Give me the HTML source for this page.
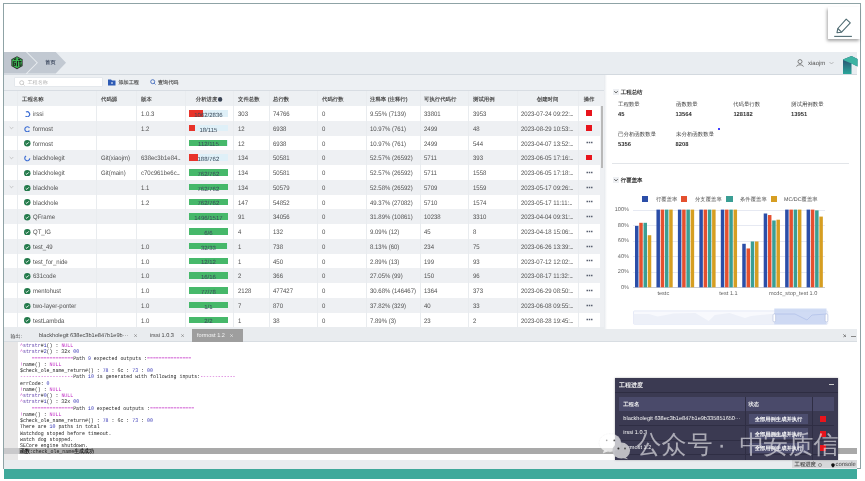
<!DOCTYPE html><html><head><meta charset="utf-8"><style>
*{margin:0;padding:0;box-sizing:border-box}
html,body{width:865px;height:481px;overflow:hidden;background:#fff;position:relative;font-family:"Liberation Sans", sans-serif;color:#555;text-rendering:geometricPrecision}
body{filter:blur(0.3px)}
.ab{position:absolute}
.t{position:absolute;white-space:nowrap;line-height:1}

</style></head><body>
<div class="ab" style="left:3px;top:3px;width:858px;height:466px;border:1px solid #8fa3a6"></div>
<div class="ab" style="left:828px;top:7px;width:31.5px;height:32px;background:#fff;box-shadow:-1px 2px 3px rgba(0,0,0,0.35)"></div>
<svg class="ab" style="left:827px;top:7px" width="32" height="32" viewBox="0 0 32 32">
<path d="M10 25.7 L10.8 21.5 L19.2 12.2 L23.3 15.9 L14.6 25.2 Z" fill="none" stroke="#4f6b72" stroke-width="1.1" stroke-linejoin="round"/>
<path d="M10.8 21.5 L14.6 25.2" stroke="#4f6b72" stroke-width="1.1"/>
<path d="M7.2 29.4 H24.9" stroke="#4f6b72" stroke-width="1.1"/>
</svg>
<div class="ab" style="left:4px;top:52px;width:853px;height:22.5px;background:#e9edf1;border-bottom:1px solid #d3d9df"></div>
<svg class="ab" style="left:4px;top:52px" width="64" height="21.5" viewBox="0 0 64 21.5">
<path d="M0 0 H21.9 L32.6 10.75 L21.9 21.5 H0 Z" fill="#bfc6cf"/>
<path d="M23.2 0 H51.7 L62 10.75 L51.7 21.5 H23.2 L33.9 10.75 Z" fill="#c2c9d2"/>
</svg>
<svg class="ab" style="left:10.6px;top:56.4px" width="12" height="13.4" viewBox="0 0 12 13.4">
<path d="M6 0.2 L11.6 3.3 V10.1 L6 13.2 L0.4 10.1 V3.3 Z" fill="#262b26"/>
<path d="M6 1.1 L10.8 3.8 V9.6 L6 12.3 L1.2 9.6 V3.8 Z" fill="#3dba55"/>
<path d="M2.6 3.2 L4.6 2.2 L5.6 3 L3.8 4.2 Z M7.4 2.6 L9.6 3.6 L8.4 4.6 L6.8 3.6 Z" fill="#1f241f"/>
<path d="M1.8 5.2 h3 v1 h-2 v2.6 h1.2 v-1 h-0.8 v-0.9 h1.8 v2.9 h-3.2z" fill="#1f241f"/>
<path d="M5.9 5 h1.1 v5.6 h-1.1z" fill="#1f241f"/>
<path d="M7.6 5 h2.8 v1 h-0.9 v4.3 h-1.1 v-4.3 h-0.8z" fill="#1f241f"/>
<path d="M10.6 7 V9.6 L8.6 10.8 Z" fill="#1f241f" opacity="0.8"/>
</svg>
<div class="t" style="left:45.3px;top:61.3px;font-size:5.1px;color:#3e4a60;font-weight:bold">首页</div>
<svg class="ab" style="left:796px;top:59px" width="8" height="8" viewBox="0 0 8 8">
<circle cx="4" cy="2.6" r="2" fill="none" stroke="#666" stroke-width="0.8"/>
<path d="M0.6 7.6 C1 5.2 7 5.2 7.4 7.6" fill="none" stroke="#666" stroke-width="0.8"/>
</svg>
<div class="t" style="left:808px;top:60.5px;font-size:6px;color:#555">xiaojm</div>
<svg class="ab" style="left:829px;top:61px" width="5" height="4" viewBox="0 0 5 4"><path d="M0.5 1 L2.5 3 L4.5 1" fill="none" stroke="#999" stroke-width="0.6"/></svg>
<svg class="ab" style="left:842px;top:55px" width="16" height="19" viewBox="0 0 16 19">
<defs><linearGradient id="lg" x1="0" y1="0" x2="0" y2="1"><stop offset="0" stop-color="#2c3e6a"/><stop offset="1" stop-color="#2aa69a"/></linearGradient></defs>
<path d="M1 4.5 L9.5 1 L15.5 4 V11.5 L9.5 8.5 V19 H1 Z" fill="url(#lg)"/>
<path d="M1 4.5 L9.5 1 L15.5 4 V11.5 L9.5 8.5 L1 5 Z" fill="#3db3a3"/>
</svg>
<div class="ab" style="left:4px;top:74.5px;width:599.5px;height:16.5px;background:#edf0f3;border-bottom:1px solid #d8dde3"></div>
<div class="ab" style="left:14px;top:77px;width:89px;height:10px;background:#fff;border:1px solid #e4e8ec;border-radius:1px"></div>
<svg class="ab" style="left:18.5px;top:79.5px" width="6" height="6" viewBox="0 0 6 6"><circle cx="2.7" cy="2.7" r="2" fill="none" stroke="#aaa" stroke-width="0.6"/><path d="M4.2 4.2 L5.5 5.5" stroke="#aaa" stroke-width="0.6"/></svg>
<div class="t" style="left:27.5px;top:80.6px;font-size:5.1px;color:#b0b0b0">工程名称</div>
<svg class="ab" style="left:108px;top:79px" width="8" height="7" viewBox="0 0 8 7"><path d="M0 0.5 H3 L4 1.5 H7.5 V6.5 H0 Z" fill="#2d5bb5"/><path d="M3 4 H5 M4 3 V5" stroke="#fff" stroke-width="0.6"/></svg>
<div class="t" style="left:118.5px;top:80.6px;font-size:5.1px;color:#555;font-weight:bold">添加工程</div>
<svg class="ab" style="left:149.5px;top:79px" width="6" height="6" viewBox="0 0 6 6"><circle cx="2.7" cy="2.7" r="2" fill="none" stroke="#2d5bb5" stroke-width="0.8"/><path d="M4.2 4.2 L5.5 5.5" stroke="#2d5bb5" stroke-width="0.8"/></svg>
<div class="t" style="left:158px;top:80.6px;font-size:5.1px;color:#555;font-weight:bold">查询代码</div>
<div class="ab" style="left:4px;top:91px;width:596px;height:15px;background:#edf0f3"></div>
<div class="t" style="left:21.6px;top:96.7px;font-size:10px;transform:scale(0.54);transform-origin:0 0;color:#4a4a4a;font-weight:bold">工程名称</div>
<div class="t" style="left:100.6px;top:96.7px;font-size:10px;transform:scale(0.54);transform-origin:0 0;color:#4a4a4a;font-weight:bold">代码源</div>
<div class="t" style="left:140.6px;top:96.7px;font-size:10px;transform:scale(0.54);transform-origin:0 0;color:#4a4a4a;font-weight:bold">版本</div>
<div class="t" style="left:184.7px;width:89.4px;text-align:center;top:96.7px;font-size:10px;transform:scale(0.54);transform-origin:0 0;color:#4a4a4a;font-weight:bold">分析进度<span style="display:inline-block;width:8.5px;height:8.5px;border-radius:50%;background:#3a4456;vertical-align:-1.1px;margin-left:1.1px"></span></div>
<div class="t" style="left:237.6px;top:96.7px;font-size:10px;transform:scale(0.54);transform-origin:0 0;color:#4a4a4a;font-weight:bold">文件总数</div>
<div class="t" style="left:273.4px;top:96.7px;font-size:10px;transform:scale(0.54);transform-origin:0 0;color:#4a4a4a;font-weight:bold">总行数</div>
<div class="t" style="left:321.9px;top:96.7px;font-size:10px;transform:scale(0.54);transform-origin:0 0;color:#4a4a4a;font-weight:bold">代码行数</div>
<div class="t" style="left:370.2px;top:96.7px;font-size:10px;transform:scale(0.54);transform-origin:0 0;color:#4a4a4a;font-weight:bold">注释率 (注释行)</div>
<div class="t" style="left:424.2px;top:96.7px;font-size:10px;transform:scale(0.54);transform-origin:0 0;color:#4a4a4a;font-weight:bold">可执行代码行</div>
<div class="t" style="left:473.0px;top:96.7px;font-size:10px;transform:scale(0.54);transform-origin:0 0;color:#4a4a4a;font-weight:bold">测试用例</div>
<div class="t" style="left:516.7px;width:113.3px;text-align:center;top:96.7px;font-size:10px;transform:scale(0.54);transform-origin:0 0;color:#4a4a4a;font-weight:bold">创建时间</div>
<div class="t" style="left:577.9px;width:40.9px;text-align:center;top:96.7px;font-size:10px;transform:scale(0.54);transform-origin:0 0;color:#4a4a4a;font-weight:bold">操作</div>
<div class="ab" style="left:4px;top:106.00px;width:596px;height:15.05px;background:#fff"></div>
<svg class="ab" style="left:24.0px;top:110.92px" width="6.5" height="6.5" viewBox="0 0 10 10"><path d="M3 1.6 A3.9 3.9 0 1 1 2.4 8.2" fill="none" stroke="#3d6ed4" stroke-width="1.8"/></svg>
<div class="t" style="left:33.3px;top:112.03px;font-size:6.5px;transform:scaleX(0.923);transform-origin:0 0;color:#505050">irssi</div>
<div class="t" style="left:140.6px;top:112.03px;font-size:6.5px;transform:scaleX(0.923);transform-origin:0 0;color:#505050">1.0.3</div>
<div class="ab" style="left:188.6px;top:110.08px;width:39.6px;height:6.6px;background:#dff0f8"></div>
<div class="ab" style="left:188.6px;top:110.08px;width:14.83px;height:6.6px;background:#e8332a"></div>
<div class="t" style="left:188.6px;width:39.6px;text-align:center;top:112.78px;font-size:6.0px;color:#3a4a5a">1062/2836</div>
<div class="t" style="left:237.6px;top:112.03px;font-size:6.5px;transform:scaleX(0.923);transform-origin:0 0;color:#505050">303</div>
<div class="t" style="left:273.4px;top:112.03px;font-size:6.5px;transform:scaleX(0.923);transform-origin:0 0;color:#505050">74766</div>
<div class="t" style="left:321.9px;top:112.03px;font-size:6.5px;transform:scaleX(0.923);transform-origin:0 0;color:#505050">0</div>
<div class="t" style="left:370.2px;top:112.03px;font-size:6.5px;transform:scaleX(0.923);transform-origin:0 0;color:#505050">9.55% (7139)</div>
<div class="t" style="left:424.2px;top:112.03px;font-size:6.5px;transform:scaleX(0.923);transform-origin:0 0;color:#505050">33801</div>
<div class="t" style="left:473.0px;top:112.03px;font-size:6.5px;transform:scaleX(0.923);transform-origin:0 0;color:#505050">3953</div>
<div class="t" style="left:521.3px;top:112.03px;font-size:6.5px;transform:scaleX(0.923);transform-origin:0 0;color:#505050">2023-07-24 09:22:<span style="letter-spacing:-0.95px">...</span></div>
<div class="ab" style="left:586px;top:110.38px;width:6.2px;height:5.8px;background:#e8141c"></div>
<div class="ab" style="left:4px;top:120.75px;width:596px;height:15.05px;background:#eef0f3"></div>
<svg class="ab" style="left:9px;top:126.1px" width="5" height="4" viewBox="0 0 5 4"><path d="M0.7 1 L2.5 2.8 L4.3 1" fill="none" stroke="#aaa" stroke-width="0.6"/></svg>
<svg class="ab" style="left:24.0px;top:125.67px" width="6.5" height="6.5" viewBox="0 0 10 10"><path d="M8.4 2.8 A3.9 3.9 0 1 0 8.4 7.2" fill="none" stroke="#3d6ed4" stroke-width="1.8"/></svg>
<div class="t" style="left:33.3px;top:126.78px;font-size:6.5px;transform:scaleX(0.923);transform-origin:0 0;color:#505050">formost</div>
<div class="t" style="left:140.6px;top:126.78px;font-size:6.5px;transform:scaleX(0.923);transform-origin:0 0;color:#505050">1.2</div>
<div class="ab" style="left:188.6px;top:124.83px;width:39.6px;height:6.6px;background:#dff0f8"></div>
<div class="ab" style="left:188.6px;top:124.83px;width:6.20px;height:6.6px;background:#e8332a"></div>
<div class="t" style="left:188.6px;width:39.6px;text-align:center;top:127.53px;font-size:6.0px;color:#3a4a5a">18/115</div>
<div class="t" style="left:237.6px;top:126.78px;font-size:6.5px;transform:scaleX(0.923);transform-origin:0 0;color:#505050">12</div>
<div class="t" style="left:273.4px;top:126.78px;font-size:6.5px;transform:scaleX(0.923);transform-origin:0 0;color:#505050">6938</div>
<div class="t" style="left:321.9px;top:126.78px;font-size:6.5px;transform:scaleX(0.923);transform-origin:0 0;color:#505050">0</div>
<div class="t" style="left:370.2px;top:126.78px;font-size:6.5px;transform:scaleX(0.923);transform-origin:0 0;color:#505050">10.97% (761)</div>
<div class="t" style="left:424.2px;top:126.78px;font-size:6.5px;transform:scaleX(0.923);transform-origin:0 0;color:#505050">2499</div>
<div class="t" style="left:473.0px;top:126.78px;font-size:6.5px;transform:scaleX(0.923);transform-origin:0 0;color:#505050">48</div>
<div class="t" style="left:521.3px;top:126.78px;font-size:6.5px;transform:scaleX(0.923);transform-origin:0 0;color:#505050">2023-08-29 10:53:<span style="letter-spacing:-0.95px">...</span></div>
<div class="ab" style="left:586px;top:125.12px;width:6.2px;height:5.8px;background:#e8141c"></div>
<div class="ab" style="left:4px;top:135.50px;width:596px;height:15.05px;background:#fff"></div>
<svg class="ab" style="left:24.0px;top:140.43px" width="6.5" height="6.5" viewBox="0 0 10 10"><circle cx="5" cy="5" r="5" fill="#237a4b"/><path d="M2.6 5.2 L4.3 6.8 L7.4 3.6" fill="none" stroke="#fff" stroke-width="1.4"/></svg>
<div class="t" style="left:33.3px;top:141.53px;font-size:6.5px;transform:scaleX(0.923);transform-origin:0 0;color:#505050">formost</div>
<div class="ab" style="left:188.6px;top:139.57px;width:39.6px;height:6.6px;background:#dff0f8"></div>
<div class="ab" style="left:188.6px;top:139.57px;width:38.57px;height:6.6px;background:#46b86a"></div>
<div class="t" style="left:188.6px;width:39.6px;text-align:center;top:142.28px;font-size:6.0px;color:#3a4a5a">112/115</div>
<div class="t" style="left:237.6px;top:141.53px;font-size:6.5px;transform:scaleX(0.923);transform-origin:0 0;color:#505050">12</div>
<div class="t" style="left:273.4px;top:141.53px;font-size:6.5px;transform:scaleX(0.923);transform-origin:0 0;color:#505050">6938</div>
<div class="t" style="left:321.9px;top:141.53px;font-size:6.5px;transform:scaleX(0.923);transform-origin:0 0;color:#505050">0</div>
<div class="t" style="left:370.2px;top:141.53px;font-size:6.5px;transform:scaleX(0.923);transform-origin:0 0;color:#505050">10.97% (761)</div>
<div class="t" style="left:424.2px;top:141.53px;font-size:6.5px;transform:scaleX(0.923);transform-origin:0 0;color:#505050">2499</div>
<div class="t" style="left:473.0px;top:141.53px;font-size:6.5px;transform:scaleX(0.923);transform-origin:0 0;color:#505050">544</div>
<div class="t" style="left:521.3px;top:141.53px;font-size:6.5px;transform:scaleX(0.923);transform-origin:0 0;color:#505050">2023-04-07 13:52:<span style="letter-spacing:-0.95px">...</span></div>
<svg class="ab" style="left:585.5px;top:141px" width="7" height="3" viewBox="0 0 7 3"><rect x="0.5" y="0.75" width="1.5" height="1.5" fill="#5a6070"/><rect x="2.75" y="0.75" width="1.5" height="1.5" fill="#5a6070"/><rect x="5" y="0.75" width="1.5" height="1.5" fill="#5a6070"/></svg>
<div class="ab" style="left:4px;top:150.25px;width:596px;height:15.05px;background:#eef0f3"></div>
<svg class="ab" style="left:9px;top:155.6px" width="5" height="4" viewBox="0 0 5 4"><path d="M0.7 1 L2.5 2.8 L4.3 1" fill="none" stroke="#aaa" stroke-width="0.6"/></svg>
<svg class="ab" style="left:24.0px;top:155.18px" width="6.5" height="6.5" viewBox="0 0 10 10"><path d="M3.2 1.5 A3.9 3.9 0 1 0 8.9 5.2" fill="none" stroke="#3d6ed4" stroke-width="1.8"/></svg>
<div class="t" style="left:33.3px;top:156.28px;font-size:6.5px;transform:scaleX(0.923);transform-origin:0 0;color:#505050">blackholegit</div>
<div class="t" style="left:100.6px;top:156.28px;font-size:6.5px;transform:scaleX(0.923);transform-origin:0 0;color:#505050">Git(xiaojm)</div>
<div class="t" style="left:140.6px;top:156.28px;font-size:6.5px;transform:scaleX(0.923);transform-origin:0 0;color:#505050">638ec3b1e84<span style="letter-spacing:-0.95px">...</span></div>
<div class="ab" style="left:188.6px;top:154.32px;width:39.6px;height:6.6px;background:#dff0f8"></div>
<div class="ab" style="left:188.6px;top:154.32px;width:9.77px;height:6.6px;background:#e8332a"></div>
<div class="t" style="left:188.6px;width:39.6px;text-align:center;top:157.03px;font-size:6.0px;color:#3a4a5a">188/762</div>
<div class="t" style="left:237.6px;top:156.28px;font-size:6.5px;transform:scaleX(0.923);transform-origin:0 0;color:#505050">134</div>
<div class="t" style="left:273.4px;top:156.28px;font-size:6.5px;transform:scaleX(0.923);transform-origin:0 0;color:#505050">50581</div>
<div class="t" style="left:321.9px;top:156.28px;font-size:6.5px;transform:scaleX(0.923);transform-origin:0 0;color:#505050">0</div>
<div class="t" style="left:370.2px;top:156.28px;font-size:6.5px;transform:scaleX(0.923);transform-origin:0 0;color:#505050">52.57% (26592)</div>
<div class="t" style="left:424.2px;top:156.28px;font-size:6.5px;transform:scaleX(0.923);transform-origin:0 0;color:#505050">5711</div>
<div class="t" style="left:473.0px;top:156.28px;font-size:6.5px;transform:scaleX(0.923);transform-origin:0 0;color:#505050">393</div>
<div class="t" style="left:521.3px;top:156.28px;font-size:6.5px;transform:scaleX(0.923);transform-origin:0 0;color:#505050">2023-06-05 17:16:<span style="letter-spacing:-0.95px">...</span></div>
<div class="ab" style="left:586px;top:154.62px;width:6.2px;height:5.8px;background:#e8141c"></div>
<div class="ab" style="left:4px;top:165.00px;width:596px;height:15.05px;background:#fff"></div>
<svg class="ab" style="left:24.0px;top:169.93px" width="6.5" height="6.5" viewBox="0 0 10 10"><circle cx="5" cy="5" r="5" fill="#237a4b"/><path d="M2.6 5.2 L4.3 6.8 L7.4 3.6" fill="none" stroke="#fff" stroke-width="1.4"/></svg>
<div class="t" style="left:33.3px;top:171.03px;font-size:6.5px;transform:scaleX(0.923);transform-origin:0 0;color:#505050">blackholegit</div>
<div class="t" style="left:100.6px;top:171.03px;font-size:6.5px;transform:scaleX(0.923);transform-origin:0 0;color:#505050">Git(main)</div>
<div class="t" style="left:140.6px;top:171.03px;font-size:6.5px;transform:scaleX(0.923);transform-origin:0 0;color:#505050">c70c961be6c<span style="letter-spacing:-0.95px">...</span></div>
<div class="ab" style="left:188.6px;top:169.07px;width:39.6px;height:6.6px;background:#dff0f8"></div>
<div class="ab" style="left:188.6px;top:169.07px;width:39.60px;height:6.6px;background:#46b86a"></div>
<div class="t" style="left:188.6px;width:39.6px;text-align:center;top:171.78px;font-size:6.0px;color:#3a4a5a">762/762</div>
<div class="t" style="left:237.6px;top:171.03px;font-size:6.5px;transform:scaleX(0.923);transform-origin:0 0;color:#505050">134</div>
<div class="t" style="left:273.4px;top:171.03px;font-size:6.5px;transform:scaleX(0.923);transform-origin:0 0;color:#505050">50581</div>
<div class="t" style="left:321.9px;top:171.03px;font-size:6.5px;transform:scaleX(0.923);transform-origin:0 0;color:#505050">0</div>
<div class="t" style="left:370.2px;top:171.03px;font-size:6.5px;transform:scaleX(0.923);transform-origin:0 0;color:#505050">52.57% (26592)</div>
<div class="t" style="left:424.2px;top:171.03px;font-size:6.5px;transform:scaleX(0.923);transform-origin:0 0;color:#505050">5711</div>
<div class="t" style="left:473.0px;top:171.03px;font-size:6.5px;transform:scaleX(0.923);transform-origin:0 0;color:#505050">1558</div>
<div class="t" style="left:521.3px;top:171.03px;font-size:6.5px;transform:scaleX(0.923);transform-origin:0 0;color:#505050">2023-06-05 17:18:<span style="letter-spacing:-0.95px">...</span></div>
<svg class="ab" style="left:585.5px;top:171px" width="7" height="3" viewBox="0 0 7 3"><rect x="0.5" y="0.75" width="1.5" height="1.5" fill="#5a6070"/><rect x="2.75" y="0.75" width="1.5" height="1.5" fill="#5a6070"/><rect x="5" y="0.75" width="1.5" height="1.5" fill="#5a6070"/></svg>
<div class="ab" style="left:4px;top:179.75px;width:596px;height:15.05px;background:#eef0f3"></div>
<svg class="ab" style="left:9px;top:185.1px" width="5" height="4" viewBox="0 0 5 4"><path d="M0.7 1 L2.5 2.8 L4.3 1" fill="none" stroke="#aaa" stroke-width="0.6"/></svg>
<svg class="ab" style="left:24.0px;top:184.68px" width="6.5" height="6.5" viewBox="0 0 10 10"><circle cx="5" cy="5" r="5" fill="#237a4b"/><path d="M2.6 5.2 L4.3 6.8 L7.4 3.6" fill="none" stroke="#fff" stroke-width="1.4"/></svg>
<div class="t" style="left:33.3px;top:185.78px;font-size:6.5px;transform:scaleX(0.923);transform-origin:0 0;color:#505050">blackhole</div>
<div class="t" style="left:140.6px;top:185.78px;font-size:6.5px;transform:scaleX(0.923);transform-origin:0 0;color:#505050">1.1</div>
<div class="ab" style="left:188.6px;top:183.82px;width:39.6px;height:6.6px;background:#dff0f8"></div>
<div class="ab" style="left:188.6px;top:183.82px;width:39.60px;height:6.6px;background:#46b86a"></div>
<div class="t" style="left:188.6px;width:39.6px;text-align:center;top:186.53px;font-size:6.0px;color:#3a4a5a">762/762</div>
<div class="t" style="left:237.6px;top:185.78px;font-size:6.5px;transform:scaleX(0.923);transform-origin:0 0;color:#505050">134</div>
<div class="t" style="left:273.4px;top:185.78px;font-size:6.5px;transform:scaleX(0.923);transform-origin:0 0;color:#505050">50579</div>
<div class="t" style="left:321.9px;top:185.78px;font-size:6.5px;transform:scaleX(0.923);transform-origin:0 0;color:#505050">0</div>
<div class="t" style="left:370.2px;top:185.78px;font-size:6.5px;transform:scaleX(0.923);transform-origin:0 0;color:#505050">52.58% (26592)</div>
<div class="t" style="left:424.2px;top:185.78px;font-size:6.5px;transform:scaleX(0.923);transform-origin:0 0;color:#505050">5709</div>
<div class="t" style="left:473.0px;top:185.78px;font-size:6.5px;transform:scaleX(0.923);transform-origin:0 0;color:#505050">1559</div>
<div class="t" style="left:521.3px;top:185.78px;font-size:6.5px;transform:scaleX(0.923);transform-origin:0 0;color:#505050">2023-05-17 09:26:<span style="letter-spacing:-0.95px">...</span></div>
<svg class="ab" style="left:585.5px;top:186px" width="7" height="3" viewBox="0 0 7 3"><rect x="0.5" y="0.75" width="1.5" height="1.5" fill="#5a6070"/><rect x="2.75" y="0.75" width="1.5" height="1.5" fill="#5a6070"/><rect x="5" y="0.75" width="1.5" height="1.5" fill="#5a6070"/></svg>
<div class="ab" style="left:4px;top:194.50px;width:596px;height:15.05px;background:#fff"></div>
<svg class="ab" style="left:24.0px;top:199.43px" width="6.5" height="6.5" viewBox="0 0 10 10"><circle cx="5" cy="5" r="5" fill="#237a4b"/><path d="M2.6 5.2 L4.3 6.8 L7.4 3.6" fill="none" stroke="#fff" stroke-width="1.4"/></svg>
<div class="t" style="left:33.3px;top:200.53px;font-size:6.5px;transform:scaleX(0.923);transform-origin:0 0;color:#505050">blackhole</div>
<div class="t" style="left:140.6px;top:200.53px;font-size:6.5px;transform:scaleX(0.923);transform-origin:0 0;color:#505050">1.2</div>
<div class="ab" style="left:188.6px;top:198.57px;width:39.6px;height:6.6px;background:#dff0f8"></div>
<div class="ab" style="left:188.6px;top:198.57px;width:39.60px;height:6.6px;background:#46b86a"></div>
<div class="t" style="left:188.6px;width:39.6px;text-align:center;top:201.28px;font-size:6.0px;color:#3a4a5a">762/762</div>
<div class="t" style="left:237.6px;top:200.53px;font-size:6.5px;transform:scaleX(0.923);transform-origin:0 0;color:#505050">147</div>
<div class="t" style="left:273.4px;top:200.53px;font-size:6.5px;transform:scaleX(0.923);transform-origin:0 0;color:#505050">54852</div>
<div class="t" style="left:321.9px;top:200.53px;font-size:6.5px;transform:scaleX(0.923);transform-origin:0 0;color:#505050">0</div>
<div class="t" style="left:370.2px;top:200.53px;font-size:6.5px;transform:scaleX(0.923);transform-origin:0 0;color:#505050">49.37% (27082)</div>
<div class="t" style="left:424.2px;top:200.53px;font-size:6.5px;transform:scaleX(0.923);transform-origin:0 0;color:#505050">5710</div>
<div class="t" style="left:473.0px;top:200.53px;font-size:6.5px;transform:scaleX(0.923);transform-origin:0 0;color:#505050">1574</div>
<div class="t" style="left:521.3px;top:200.53px;font-size:6.5px;transform:scaleX(0.923);transform-origin:0 0;color:#505050">2023-05-17 11:11:<span style="letter-spacing:-0.95px">...</span></div>
<svg class="ab" style="left:585.5px;top:200px" width="7" height="3" viewBox="0 0 7 3"><rect x="0.5" y="0.75" width="1.5" height="1.5" fill="#5a6070"/><rect x="2.75" y="0.75" width="1.5" height="1.5" fill="#5a6070"/><rect x="5" y="0.75" width="1.5" height="1.5" fill="#5a6070"/></svg>
<div class="ab" style="left:4px;top:209.25px;width:596px;height:15.05px;background:#eef0f3"></div>
<svg class="ab" style="left:24.0px;top:214.18px" width="6.5" height="6.5" viewBox="0 0 10 10"><circle cx="5" cy="5" r="5" fill="#237a4b"/><path d="M2.6 5.2 L4.3 6.8 L7.4 3.6" fill="none" stroke="#fff" stroke-width="1.4"/></svg>
<div class="t" style="left:33.3px;top:215.28px;font-size:6.5px;transform:scaleX(0.923);transform-origin:0 0;color:#505050">QFrame</div>
<div class="ab" style="left:188.6px;top:213.32px;width:39.6px;height:6.6px;background:#dff0f8"></div>
<div class="ab" style="left:188.6px;top:213.32px;width:39.05px;height:6.6px;background:#46b86a"></div>
<div class="t" style="left:188.6px;width:39.6px;text-align:center;top:216.03px;font-size:6.0px;color:#3a4a5a">1496/1517</div>
<div class="t" style="left:237.6px;top:215.28px;font-size:6.5px;transform:scaleX(0.923);transform-origin:0 0;color:#505050">91</div>
<div class="t" style="left:273.4px;top:215.28px;font-size:6.5px;transform:scaleX(0.923);transform-origin:0 0;color:#505050">34056</div>
<div class="t" style="left:321.9px;top:215.28px;font-size:6.5px;transform:scaleX(0.923);transform-origin:0 0;color:#505050">0</div>
<div class="t" style="left:370.2px;top:215.28px;font-size:6.5px;transform:scaleX(0.923);transform-origin:0 0;color:#505050">31.89% (10861)</div>
<div class="t" style="left:424.2px;top:215.28px;font-size:6.5px;transform:scaleX(0.923);transform-origin:0 0;color:#505050">10238</div>
<div class="t" style="left:473.0px;top:215.28px;font-size:6.5px;transform:scaleX(0.923);transform-origin:0 0;color:#505050">3310</div>
<div class="t" style="left:521.3px;top:215.28px;font-size:6.5px;transform:scaleX(0.923);transform-origin:0 0;color:#505050">2023-04-04 09:31:<span style="letter-spacing:-0.95px">...</span></div>
<svg class="ab" style="left:585.5px;top:215px" width="7" height="3" viewBox="0 0 7 3"><rect x="0.5" y="0.75" width="1.5" height="1.5" fill="#5a6070"/><rect x="2.75" y="0.75" width="1.5" height="1.5" fill="#5a6070"/><rect x="5" y="0.75" width="1.5" height="1.5" fill="#5a6070"/></svg>
<div class="ab" style="left:4px;top:224.00px;width:596px;height:15.05px;background:#fff"></div>
<svg class="ab" style="left:24.0px;top:228.93px" width="6.5" height="6.5" viewBox="0 0 10 10"><circle cx="5" cy="5" r="5" fill="#237a4b"/><path d="M2.6 5.2 L4.3 6.8 L7.4 3.6" fill="none" stroke="#fff" stroke-width="1.4"/></svg>
<div class="t" style="left:33.3px;top:230.03px;font-size:6.5px;transform:scaleX(0.923);transform-origin:0 0;color:#505050">QT_IG</div>
<div class="ab" style="left:188.6px;top:228.07px;width:39.6px;height:6.6px;background:#dff0f8"></div>
<div class="ab" style="left:188.6px;top:228.07px;width:39.60px;height:6.6px;background:#46b86a"></div>
<div class="t" style="left:188.6px;width:39.6px;text-align:center;top:230.78px;font-size:6.0px;color:#3a4a5a">6/6</div>
<div class="t" style="left:237.6px;top:230.03px;font-size:6.5px;transform:scaleX(0.923);transform-origin:0 0;color:#505050">4</div>
<div class="t" style="left:273.4px;top:230.03px;font-size:6.5px;transform:scaleX(0.923);transform-origin:0 0;color:#505050">132</div>
<div class="t" style="left:321.9px;top:230.03px;font-size:6.5px;transform:scaleX(0.923);transform-origin:0 0;color:#505050">0</div>
<div class="t" style="left:370.2px;top:230.03px;font-size:6.5px;transform:scaleX(0.923);transform-origin:0 0;color:#505050">9.09% (12)</div>
<div class="t" style="left:424.2px;top:230.03px;font-size:6.5px;transform:scaleX(0.923);transform-origin:0 0;color:#505050">45</div>
<div class="t" style="left:473.0px;top:230.03px;font-size:6.5px;transform:scaleX(0.923);transform-origin:0 0;color:#505050">8</div>
<div class="t" style="left:521.3px;top:230.03px;font-size:6.5px;transform:scaleX(0.923);transform-origin:0 0;color:#505050">2023-04-18 15:06:<span style="letter-spacing:-0.95px">...</span></div>
<svg class="ab" style="left:585.5px;top:230px" width="7" height="3" viewBox="0 0 7 3"><rect x="0.5" y="0.75" width="1.5" height="1.5" fill="#5a6070"/><rect x="2.75" y="0.75" width="1.5" height="1.5" fill="#5a6070"/><rect x="5" y="0.75" width="1.5" height="1.5" fill="#5a6070"/></svg>
<div class="ab" style="left:4px;top:238.75px;width:596px;height:15.05px;background:#eef0f3"></div>
<svg class="ab" style="left:24.0px;top:243.68px" width="6.5" height="6.5" viewBox="0 0 10 10"><circle cx="5" cy="5" r="5" fill="#237a4b"/><path d="M2.6 5.2 L4.3 6.8 L7.4 3.6" fill="none" stroke="#fff" stroke-width="1.4"/></svg>
<div class="t" style="left:33.3px;top:244.78px;font-size:6.5px;transform:scaleX(0.923);transform-origin:0 0;color:#505050">test_49</div>
<div class="t" style="left:140.6px;top:244.78px;font-size:6.5px;transform:scaleX(0.923);transform-origin:0 0;color:#505050">1.0</div>
<div class="ab" style="left:188.6px;top:242.82px;width:39.6px;height:6.6px;background:#dff0f8"></div>
<div class="ab" style="left:188.6px;top:242.82px;width:38.40px;height:6.6px;background:#46b86a"></div>
<div class="t" style="left:188.6px;width:39.6px;text-align:center;top:245.53px;font-size:6.0px;color:#3a4a5a">32/33</div>
<div class="t" style="left:237.6px;top:244.78px;font-size:6.5px;transform:scaleX(0.923);transform-origin:0 0;color:#505050">1</div>
<div class="t" style="left:273.4px;top:244.78px;font-size:6.5px;transform:scaleX(0.923);transform-origin:0 0;color:#505050">738</div>
<div class="t" style="left:321.9px;top:244.78px;font-size:6.5px;transform:scaleX(0.923);transform-origin:0 0;color:#505050">0</div>
<div class="t" style="left:370.2px;top:244.78px;font-size:6.5px;transform:scaleX(0.923);transform-origin:0 0;color:#505050">8.13% (60)</div>
<div class="t" style="left:424.2px;top:244.78px;font-size:6.5px;transform:scaleX(0.923);transform-origin:0 0;color:#505050">234</div>
<div class="t" style="left:473.0px;top:244.78px;font-size:6.5px;transform:scaleX(0.923);transform-origin:0 0;color:#505050">75</div>
<div class="t" style="left:521.3px;top:244.78px;font-size:6.5px;transform:scaleX(0.923);transform-origin:0 0;color:#505050">2023-06-26 13:39:<span style="letter-spacing:-0.95px">...</span></div>
<svg class="ab" style="left:585.5px;top:245px" width="7" height="3" viewBox="0 0 7 3"><rect x="0.5" y="0.75" width="1.5" height="1.5" fill="#5a6070"/><rect x="2.75" y="0.75" width="1.5" height="1.5" fill="#5a6070"/><rect x="5" y="0.75" width="1.5" height="1.5" fill="#5a6070"/></svg>
<div class="ab" style="left:4px;top:253.50px;width:596px;height:15.05px;background:#fff"></div>
<svg class="ab" style="left:24.0px;top:258.43px" width="6.5" height="6.5" viewBox="0 0 10 10"><circle cx="5" cy="5" r="5" fill="#237a4b"/><path d="M2.6 5.2 L4.3 6.8 L7.4 3.6" fill="none" stroke="#fff" stroke-width="1.4"/></svg>
<div class="t" style="left:33.3px;top:259.52px;font-size:6.5px;transform:scaleX(0.923);transform-origin:0 0;color:#505050">test_for_nide</div>
<div class="t" style="left:140.6px;top:259.52px;font-size:6.5px;transform:scaleX(0.923);transform-origin:0 0;color:#505050">1.0</div>
<div class="ab" style="left:188.6px;top:257.57px;width:39.6px;height:6.6px;background:#dff0f8"></div>
<div class="ab" style="left:188.6px;top:257.57px;width:39.60px;height:6.6px;background:#46b86a"></div>
<div class="t" style="left:188.6px;width:39.6px;text-align:center;top:260.27px;font-size:6.0px;color:#3a4a5a">12/12</div>
<div class="t" style="left:237.6px;top:259.52px;font-size:6.5px;transform:scaleX(0.923);transform-origin:0 0;color:#505050">1</div>
<div class="t" style="left:273.4px;top:259.52px;font-size:6.5px;transform:scaleX(0.923);transform-origin:0 0;color:#505050">450</div>
<div class="t" style="left:321.9px;top:259.52px;font-size:6.5px;transform:scaleX(0.923);transform-origin:0 0;color:#505050">0</div>
<div class="t" style="left:370.2px;top:259.52px;font-size:6.5px;transform:scaleX(0.923);transform-origin:0 0;color:#505050">2.89% (13)</div>
<div class="t" style="left:424.2px;top:259.52px;font-size:6.5px;transform:scaleX(0.923);transform-origin:0 0;color:#505050">199</div>
<div class="t" style="left:473.0px;top:259.52px;font-size:6.5px;transform:scaleX(0.923);transform-origin:0 0;color:#505050">93</div>
<div class="t" style="left:521.3px;top:259.52px;font-size:6.5px;transform:scaleX(0.923);transform-origin:0 0;color:#505050">2023-07-12 12:02:<span style="letter-spacing:-0.95px">...</span></div>
<svg class="ab" style="left:585.5px;top:259px" width="7" height="3" viewBox="0 0 7 3"><rect x="0.5" y="0.75" width="1.5" height="1.5" fill="#5a6070"/><rect x="2.75" y="0.75" width="1.5" height="1.5" fill="#5a6070"/><rect x="5" y="0.75" width="1.5" height="1.5" fill="#5a6070"/></svg>
<div class="ab" style="left:4px;top:268.25px;width:596px;height:15.05px;background:#eef0f3"></div>
<svg class="ab" style="left:24.0px;top:273.18px" width="6.5" height="6.5" viewBox="0 0 10 10"><circle cx="5" cy="5" r="5" fill="#237a4b"/><path d="M2.6 5.2 L4.3 6.8 L7.4 3.6" fill="none" stroke="#fff" stroke-width="1.4"/></svg>
<div class="t" style="left:33.3px;top:274.27px;font-size:6.5px;transform:scaleX(0.923);transform-origin:0 0;color:#505050">631code</div>
<div class="t" style="left:140.6px;top:274.27px;font-size:6.5px;transform:scaleX(0.923);transform-origin:0 0;color:#505050">1.0</div>
<div class="ab" style="left:188.6px;top:272.32px;width:39.6px;height:6.6px;background:#dff0f8"></div>
<div class="ab" style="left:188.6px;top:272.32px;width:39.60px;height:6.6px;background:#46b86a"></div>
<div class="t" style="left:188.6px;width:39.6px;text-align:center;top:275.02px;font-size:6.0px;color:#3a4a5a">16/16</div>
<div class="t" style="left:237.6px;top:274.27px;font-size:6.5px;transform:scaleX(0.923);transform-origin:0 0;color:#505050">2</div>
<div class="t" style="left:273.4px;top:274.27px;font-size:6.5px;transform:scaleX(0.923);transform-origin:0 0;color:#505050">366</div>
<div class="t" style="left:321.9px;top:274.27px;font-size:6.5px;transform:scaleX(0.923);transform-origin:0 0;color:#505050">0</div>
<div class="t" style="left:370.2px;top:274.27px;font-size:6.5px;transform:scaleX(0.923);transform-origin:0 0;color:#505050">27.05% (99)</div>
<div class="t" style="left:424.2px;top:274.27px;font-size:6.5px;transform:scaleX(0.923);transform-origin:0 0;color:#505050">150</div>
<div class="t" style="left:473.0px;top:274.27px;font-size:6.5px;transform:scaleX(0.923);transform-origin:0 0;color:#505050">96</div>
<div class="t" style="left:521.3px;top:274.27px;font-size:6.5px;transform:scaleX(0.923);transform-origin:0 0;color:#505050">2023-08-17 11:32:<span style="letter-spacing:-0.95px">...</span></div>
<svg class="ab" style="left:585.5px;top:274px" width="7" height="3" viewBox="0 0 7 3"><rect x="0.5" y="0.75" width="1.5" height="1.5" fill="#5a6070"/><rect x="2.75" y="0.75" width="1.5" height="1.5" fill="#5a6070"/><rect x="5" y="0.75" width="1.5" height="1.5" fill="#5a6070"/></svg>
<div class="ab" style="left:4px;top:283.00px;width:596px;height:15.05px;background:#fff"></div>
<svg class="ab" style="left:24.0px;top:287.93px" width="6.5" height="6.5" viewBox="0 0 10 10"><circle cx="5" cy="5" r="5" fill="#237a4b"/><path d="M2.6 5.2 L4.3 6.8 L7.4 3.6" fill="none" stroke="#fff" stroke-width="1.4"/></svg>
<div class="t" style="left:33.3px;top:289.02px;font-size:6.5px;transform:scaleX(0.923);transform-origin:0 0;color:#505050">mentohust</div>
<div class="t" style="left:140.6px;top:289.02px;font-size:6.5px;transform:scaleX(0.923);transform-origin:0 0;color:#505050">1.0</div>
<div class="ab" style="left:188.6px;top:287.07px;width:39.6px;height:6.6px;background:#dff0f8"></div>
<div class="ab" style="left:188.6px;top:287.07px;width:39.09px;height:6.6px;background:#46b86a"></div>
<div class="t" style="left:188.6px;width:39.6px;text-align:center;top:289.77px;font-size:6.0px;color:#3a4a5a">77/78</div>
<div class="t" style="left:237.6px;top:289.02px;font-size:6.5px;transform:scaleX(0.923);transform-origin:0 0;color:#505050">2128</div>
<div class="t" style="left:273.4px;top:289.02px;font-size:6.5px;transform:scaleX(0.923);transform-origin:0 0;color:#505050">477427</div>
<div class="t" style="left:321.9px;top:289.02px;font-size:6.5px;transform:scaleX(0.923);transform-origin:0 0;color:#505050">0</div>
<div class="t" style="left:370.2px;top:289.02px;font-size:6.5px;transform:scaleX(0.923);transform-origin:0 0;color:#505050">30.68% (146467)</div>
<div class="t" style="left:424.2px;top:289.02px;font-size:6.5px;transform:scaleX(0.923);transform-origin:0 0;color:#505050">1364</div>
<div class="t" style="left:473.0px;top:289.02px;font-size:6.5px;transform:scaleX(0.923);transform-origin:0 0;color:#505050">373</div>
<div class="t" style="left:521.3px;top:289.02px;font-size:6.5px;transform:scaleX(0.923);transform-origin:0 0;color:#505050">2023-06-29 08:50:<span style="letter-spacing:-0.95px">...</span></div>
<svg class="ab" style="left:585.5px;top:289px" width="7" height="3" viewBox="0 0 7 3"><rect x="0.5" y="0.75" width="1.5" height="1.5" fill="#5a6070"/><rect x="2.75" y="0.75" width="1.5" height="1.5" fill="#5a6070"/><rect x="5" y="0.75" width="1.5" height="1.5" fill="#5a6070"/></svg>
<div class="ab" style="left:4px;top:297.75px;width:596px;height:15.05px;background:#eef0f3"></div>
<svg class="ab" style="left:24.0px;top:302.68px" width="6.5" height="6.5" viewBox="0 0 10 10"><circle cx="5" cy="5" r="5" fill="#237a4b"/><path d="M2.6 5.2 L4.3 6.8 L7.4 3.6" fill="none" stroke="#fff" stroke-width="1.4"/></svg>
<div class="t" style="left:33.3px;top:303.77px;font-size:6.5px;transform:scaleX(0.923);transform-origin:0 0;color:#505050">two-layer-ponter</div>
<div class="t" style="left:140.6px;top:303.77px;font-size:6.5px;transform:scaleX(0.923);transform-origin:0 0;color:#505050">1.0</div>
<div class="ab" style="left:188.6px;top:301.82px;width:39.6px;height:6.6px;background:#dff0f8"></div>
<div class="ab" style="left:188.6px;top:301.82px;width:39.60px;height:6.6px;background:#46b86a"></div>
<div class="t" style="left:188.6px;width:39.6px;text-align:center;top:304.52px;font-size:6.0px;color:#3a4a5a">1/1</div>
<div class="t" style="left:237.6px;top:303.77px;font-size:6.5px;transform:scaleX(0.923);transform-origin:0 0;color:#505050">7</div>
<div class="t" style="left:273.4px;top:303.77px;font-size:6.5px;transform:scaleX(0.923);transform-origin:0 0;color:#505050">870</div>
<div class="t" style="left:321.9px;top:303.77px;font-size:6.5px;transform:scaleX(0.923);transform-origin:0 0;color:#505050">0</div>
<div class="t" style="left:370.2px;top:303.77px;font-size:6.5px;transform:scaleX(0.923);transform-origin:0 0;color:#505050">37.82% (329)</div>
<div class="t" style="left:424.2px;top:303.77px;font-size:6.5px;transform:scaleX(0.923);transform-origin:0 0;color:#505050">40</div>
<div class="t" style="left:473.0px;top:303.77px;font-size:6.5px;transform:scaleX(0.923);transform-origin:0 0;color:#505050">33</div>
<div class="t" style="left:521.3px;top:303.77px;font-size:6.5px;transform:scaleX(0.923);transform-origin:0 0;color:#505050">2023-06-08 09:55:<span style="letter-spacing:-0.95px">...</span></div>
<svg class="ab" style="left:585.5px;top:304px" width="7" height="3" viewBox="0 0 7 3"><rect x="0.5" y="0.75" width="1.5" height="1.5" fill="#5a6070"/><rect x="2.75" y="0.75" width="1.5" height="1.5" fill="#5a6070"/><rect x="5" y="0.75" width="1.5" height="1.5" fill="#5a6070"/></svg>
<div class="ab" style="left:4px;top:312.50px;width:596px;height:15.05px;background:#fff"></div>
<svg class="ab" style="left:24.0px;top:317.43px" width="6.5" height="6.5" viewBox="0 0 10 10"><circle cx="5" cy="5" r="5" fill="#237a4b"/><path d="M2.6 5.2 L4.3 6.8 L7.4 3.6" fill="none" stroke="#fff" stroke-width="1.4"/></svg>
<div class="t" style="left:33.3px;top:318.52px;font-size:6.5px;transform:scaleX(0.923);transform-origin:0 0;color:#505050">testLambda</div>
<div class="t" style="left:140.6px;top:318.52px;font-size:6.5px;transform:scaleX(0.923);transform-origin:0 0;color:#505050">1.0</div>
<div class="ab" style="left:188.6px;top:316.57px;width:39.6px;height:6.6px;background:#dff0f8"></div>
<div class="ab" style="left:188.6px;top:316.57px;width:39.60px;height:6.6px;background:#46b86a"></div>
<div class="t" style="left:188.6px;width:39.6px;text-align:center;top:319.27px;font-size:6.0px;color:#3a4a5a">2/2</div>
<div class="t" style="left:237.6px;top:318.52px;font-size:6.5px;transform:scaleX(0.923);transform-origin:0 0;color:#505050">1</div>
<div class="t" style="left:273.4px;top:318.52px;font-size:6.5px;transform:scaleX(0.923);transform-origin:0 0;color:#505050">38</div>
<div class="t" style="left:321.9px;top:318.52px;font-size:6.5px;transform:scaleX(0.923);transform-origin:0 0;color:#505050">0</div>
<div class="t" style="left:370.2px;top:318.52px;font-size:6.5px;transform:scaleX(0.923);transform-origin:0 0;color:#505050">7.89% (3)</div>
<div class="t" style="left:424.2px;top:318.52px;font-size:6.5px;transform:scaleX(0.923);transform-origin:0 0;color:#505050">23</div>
<div class="t" style="left:473.0px;top:318.52px;font-size:6.5px;transform:scaleX(0.923);transform-origin:0 0;color:#505050">2</div>
<div class="t" style="left:521.3px;top:318.52px;font-size:6.5px;transform:scaleX(0.923);transform-origin:0 0;color:#505050">2023-08-28 19:45:<span style="letter-spacing:-0.95px">...</span></div>
<svg class="ab" style="left:585.5px;top:318px" width="7" height="3" viewBox="0 0 7 3"><rect x="0.5" y="0.75" width="1.5" height="1.5" fill="#5a6070"/><rect x="2.75" y="0.75" width="1.5" height="1.5" fill="#5a6070"/><rect x="5" y="0.75" width="1.5" height="1.5" fill="#5a6070"/></svg>
<div class="ab" style="left:17.0px;top:91px;width:0.6px;height:236.2px;background:#e9ecef"></div>
<div class="ab" style="left:96.0px;top:91px;width:0.6px;height:236.2px;background:#e9ecef"></div>
<div class="ab" style="left:136.0px;top:91px;width:0.6px;height:236.2px;background:#e9ecef"></div>
<div class="ab" style="left:184.7px;top:91px;width:0.6px;height:236.2px;background:#e9ecef"></div>
<div class="ab" style="left:233.0px;top:91px;width:0.6px;height:236.2px;background:#e9ecef"></div>
<div class="ab" style="left:268.8px;top:91px;width:0.6px;height:236.2px;background:#e9ecef"></div>
<div class="ab" style="left:317.3px;top:91px;width:0.6px;height:236.2px;background:#e9ecef"></div>
<div class="ab" style="left:365.6px;top:91px;width:0.6px;height:236.2px;background:#e9ecef"></div>
<div class="ab" style="left:419.6px;top:91px;width:0.6px;height:236.2px;background:#e9ecef"></div>
<div class="ab" style="left:468.4px;top:91px;width:0.6px;height:236.2px;background:#e9ecef"></div>
<div class="ab" style="left:516.7px;top:91px;width:0.6px;height:236.2px;background:#e9ecef"></div>
<div class="ab" style="left:577.9px;top:91px;width:0.6px;height:236.2px;background:#e9ecef"></div>
<div class="ab" style="left:600px;top:91px;width:4px;height:237px;background:#eef0f3"></div>
<div class="ab" style="left:600.6px;top:106.2px;width:2.2px;height:62px;background:#b8b8b8"></div>
<div class="ab" style="left:4px;top:327.2px;width:602px;height:1.8px;background:#e9ecef"></div>
<div class="ab" style="left:603.5px;top:74.5px;width:3px;height:254.5px;background:linear-gradient(to right,#e6e9ed,#f8f9fa 70%,#fff)"></div>
<div class="ab" style="left:612.5px;top:89.0px;width:6px;height:6px;background:#eef0f3"></div>
<svg class="ab" style="left:612.5px;top:89.0px" width="6" height="6" viewBox="0 0 6 6"><path d="M1.3 2.2 L3 3.9 L4.7 2.2" fill="none" stroke="#333" stroke-width="0.8"/></svg>
<div class="t" style="left:620.8px;top:91.1px;font-size:5.45px;color:#333;font-weight:bold">工程总结</div>
<div class="t" style="left:618.0px;top:101.8px;font-size:10px;transform:scale(0.545);transform-origin:0 0;color:#3a3a3a;font-weight:500">工程数量</div>
<div class="t" style="left:618.0px;top:112.8px;font-size:5.8px;color:#333;font-weight:bold">45</div>
<div class="t" style="left:675.6px;top:101.8px;font-size:10px;transform:scale(0.545);transform-origin:0 0;color:#3a3a3a;font-weight:500">函数数量</div>
<div class="t" style="left:675.6px;top:112.8px;font-size:5.8px;color:#333;font-weight:bold">13564</div>
<div class="t" style="left:733.4px;top:101.8px;font-size:10px;transform:scale(0.545);transform-origin:0 0;color:#3a3a3a;font-weight:500">代码量行数</div>
<div class="t" style="left:733.4px;top:112.8px;font-size:5.8px;color:#333;font-weight:bold">128182</div>
<div class="t" style="left:791.0px;top:101.8px;font-size:10px;transform:scale(0.545);transform-origin:0 0;color:#3a3a3a;font-weight:500">测试用例数量</div>
<div class="t" style="left:791.0px;top:112.8px;font-size:5.8px;color:#333;font-weight:bold">13951</div>
<div class="t" style="left:618.0px;top:132.4px;font-size:10px;transform:scale(0.545);transform-origin:0 0;color:#3a3a3a;font-weight:500">已分析函数数量</div>
<div class="t" style="left:618.0px;top:143.4px;font-size:5.8px;color:#333;font-weight:bold">5356</div>
<div class="t" style="left:675.6px;top:132.4px;font-size:10px;transform:scale(0.545);transform-origin:0 0;color:#3a3a3a;font-weight:500">未分析函数数量</div>
<div class="t" style="left:675.6px;top:143.4px;font-size:5.8px;color:#333;font-weight:bold">8208</div>
<div class="ab" style="left:717.5px;top:128.1px;width:2px;height:2px;background:#00f;border-radius:50%"></div>
<div class="ab" style="left:612px;top:162.5px;width:237px;height:0.6px;background:#e2e5e9"></div>
<div class="ab" style="left:612.5px;top:177.0px;width:6px;height:6px;background:#eef0f3"></div>
<svg class="ab" style="left:612.5px;top:177.0px" width="6" height="6" viewBox="0 0 6 6"><path d="M1.3 2.2 L3 3.9 L4.7 2.2" fill="none" stroke="#333" stroke-width="0.8"/></svg>
<div class="t" style="left:620.8px;top:179.1px;font-size:5.45px;color:#333;font-weight:bold">行覆盖率</div>
<div class="ab" style="left:642.0px;top:195.6px;width:6.4px;height:6.2px;background:#2b4ea8"></div>
<div class="t" style="left:655.7px;top:197px;font-size:10px;transform:scale(0.535);transform-origin:0 0;color:#505050;font-weight:500">行覆盖率</div>
<div class="ab" style="left:681.0px;top:195.6px;width:6.4px;height:6.2px;background:#e4502f"></div>
<div class="t" style="left:695.0px;top:197px;font-size:10px;transform:scale(0.535);transform-origin:0 0;color:#505050;font-weight:500">分支覆盖率</div>
<div class="ab" style="left:726.3px;top:195.6px;width:6.4px;height:6.2px;background:#3a9e94"></div>
<div class="t" style="left:739.6px;top:197px;font-size:10px;transform:scale(0.535);transform-origin:0 0;color:#505050;font-weight:500">条件覆盖率</div>
<div class="ab" style="left:770.7px;top:195.6px;width:6.4px;height:6.2px;background:#d69e22"></div>
<div class="t" style="left:784.0px;top:197px;font-size:10px;transform:scale(0.535);transform-origin:0 0;color:#505050;font-weight:500">MC/DC覆盖率</div>
<div class="t" style="left:600px;width:29px;text-align:right;top:285.80px;font-size:5.6px;color:#666">0%</div>
<div class="ab" style="left:632.5px;top:271.76px;width:192.3px;height:0.6px;background:#e6e9f2"></div>
<div class="t" style="left:600px;width:29px;text-align:right;top:270.26px;font-size:5.6px;color:#666">20%</div>
<div class="ab" style="left:632.5px;top:256.22px;width:192.3px;height:0.6px;background:#e6e9f2"></div>
<div class="t" style="left:600px;width:29px;text-align:right;top:254.72px;font-size:5.6px;color:#666">40%</div>
<div class="ab" style="left:632.5px;top:240.68px;width:192.3px;height:0.6px;background:#e6e9f2"></div>
<div class="t" style="left:600px;width:29px;text-align:right;top:239.18px;font-size:5.6px;color:#666">60%</div>
<div class="ab" style="left:632.5px;top:225.14px;width:192.3px;height:0.6px;background:#e6e9f2"></div>
<div class="t" style="left:600px;width:29px;text-align:right;top:223.64px;font-size:5.6px;color:#666">80%</div>
<div class="ab" style="left:632.5px;top:209.60px;width:192.3px;height:0.6px;background:#e6e9f2"></div>
<div class="t" style="left:600px;width:29px;text-align:right;top:208.10px;font-size:5.6px;color:#666">100%</div>
<div class="ab" style="left:632.5px;top:287.10px;width:192.3px;height:0.8px;background:#c8ccd6"></div>
<svg class="ab" style="left:630px;top:200px" width="200" height="90" viewBox="0 0 200 90"><rect x="5.00" y="25.92" width="3.5" height="61.38" fill="#2b4ea8"/><rect x="9.25" y="22.81" width="3.5" height="64.49" fill="#e4502f"/><rect x="13.50" y="22.81" width="3.5" height="64.49" fill="#3a9e94"/><rect x="17.75" y="35.24" width="3.5" height="52.06" fill="#d69e22"/><rect x="26.45" y="9.60" width="3.5" height="77.70" fill="#2b4ea8"/><rect x="30.70" y="9.60" width="3.5" height="77.70" fill="#e4502f"/><rect x="34.95" y="9.60" width="3.5" height="77.70" fill="#3a9e94"/><rect x="39.20" y="9.60" width="3.5" height="77.70" fill="#d69e22"/><rect x="47.90" y="9.60" width="3.5" height="77.70" fill="#2b4ea8"/><rect x="52.15" y="9.60" width="3.5" height="77.70" fill="#e4502f"/><rect x="56.40" y="9.60" width="3.5" height="77.70" fill="#3a9e94"/><rect x="60.65" y="9.60" width="3.5" height="77.70" fill="#d69e22"/><rect x="69.35" y="9.60" width="3.5" height="77.70" fill="#2b4ea8"/><rect x="73.60" y="9.60" width="3.5" height="77.70" fill="#e4502f"/><rect x="77.85" y="9.60" width="3.5" height="77.70" fill="#3a9e94"/><rect x="82.10" y="9.60" width="3.5" height="77.70" fill="#d69e22"/><rect x="90.80" y="9.60" width="3.5" height="77.70" fill="#2b4ea8"/><rect x="95.05" y="9.60" width="3.5" height="77.70" fill="#e4502f"/><rect x="99.30" y="9.60" width="3.5" height="77.70" fill="#3a9e94"/><rect x="103.55" y="9.60" width="3.5" height="77.70" fill="#d69e22"/><rect x="112.25" y="43.79" width="3.5" height="43.51" fill="#2b4ea8"/><rect x="116.50" y="48.45" width="3.5" height="38.85" fill="#e4502f"/><rect x="120.75" y="41.46" width="3.5" height="45.84" fill="#3a9e94"/><rect x="125.00" y="41.46" width="3.5" height="45.84" fill="#d69e22"/><rect x="133.70" y="13.49" width="3.5" height="73.81" fill="#2b4ea8"/><rect x="137.95" y="15.04" width="3.5" height="72.26" fill="#e4502f"/><rect x="142.20" y="20.48" width="3.5" height="66.82" fill="#3a9e94"/><rect x="146.45" y="19.70" width="3.5" height="67.60" fill="#d69e22"/><rect x="155.15" y="9.60" width="3.5" height="77.70" fill="#2b4ea8"/><rect x="159.40" y="9.60" width="3.5" height="77.70" fill="#e4502f"/><rect x="163.65" y="9.60" width="3.5" height="77.70" fill="#3a9e94"/><rect x="167.90" y="9.60" width="3.5" height="77.70" fill="#d69e22"/><rect x="176.60" y="9.60" width="3.5" height="77.70" fill="#2b4ea8"/><rect x="180.85" y="9.60" width="3.5" height="77.70" fill="#e4502f"/><rect x="185.10" y="10.38" width="3.5" height="76.92" fill="#3a9e94"/><rect x="189.35" y="16.59" width="3.5" height="70.71" fill="#d69e22"/></svg>
<div class="t" style="left:647.6px;width:31.4px;text-align:center;top:292.3px;font-size:5.6px;color:#666">testc</div>
<div class="t" style="left:709.0px;width:39.0px;text-align:center;top:292.3px;font-size:5.6px;color:#666">test 1.1</div>
<div class="t" style="left:758.8px;width:68.7px;text-align:center;top:292.3px;font-size:5.6px;color:#666">mcdc_stop_test 1.0</div>
<svg class="ab" style="left:633px;top:307px" width="196" height="19" viewBox="0 0 196 19">
<rect x="0.5" y="3.9" width="194.2" height="13.4" rx="1" fill="#f8f9fd" stroke="#dde3f3" stroke-width="0.7"/>
<path d="M0.8 7 L16 7 L24.8 9.5 L40.5 6.5 L62.4 6 L75.7 14 L81.8 8 L96.4 6 L112 11 L118 9 L137.6 7 L162 7 L174 13 L179 8 L194.5 7 V17 H0.8 Z" fill="#edf0f8"/>
<rect x="141.3" y="1.5" width="52.2" height="15.8" fill="#c6d3f1" opacity="0.8"/>
<path d="M141.3 7 L162 7 L174 13 L179 8 L193.5 7" fill="none" stroke="#a9bbe6" stroke-width="0.6"/>
<rect x="140" y="7" width="2.6" height="7.8" rx="1" fill="#fff" stroke="#a6b3d6" stroke-width="0.5"/>
<rect x="192.2" y="7" width="2.6" height="7.8" rx="1" fill="#fff" stroke="#a6b3d6" stroke-width="0.5"/>
</svg>
<div class="ab" style="left:606px;top:329px;width:251px;height:13px;background:#e9ecef"></div>
<div class="ab" style="left:4px;top:329px;width:853px;height:13px;background:#e9ecef;border-bottom:0.6px solid #d8dde2"></div>
<div class="t" style="left:10.5px;top:334.6px;font-size:5.1px;color:#444;font-weight:500">输出:</div>
<div class="t" style="left:39px;top:333.5px;font-size:5.6px;color:#444">blackholegit 638ec3b1e847b1e9b···</div>
<svg class="ab" style="left:133.6px;top:334.3px" width="3.2" height="3.2" viewBox="0 0 3.2 3.2"><path d="M0.3 0.3 L2.9 2.9 M2.9 0.3 L0.3 2.9" stroke="#777" stroke-width="0.6"/></svg>
<div class="t" style="left:150px;top:333.5px;font-size:5.6px;color:#444">irssi 1.0.3</div>
<svg class="ab" style="left:180.6px;top:334.3px" width="3.2" height="3.2" viewBox="0 0 3.2 3.2"><path d="M0.3 0.3 L2.9 2.9 M2.9 0.3 L0.3 2.9" stroke="#777" stroke-width="0.6"/></svg>
<div class="ab" style="left:192px;top:329px;width:51px;height:13px;background:#9e9e9e"></div>
<div class="t" style="left:197px;top:333.5px;font-size:5.6px;color:#f4f4f4">formost 1.2</div>
<svg class="ab" style="left:229.9px;top:334.3px" width="3.2" height="3.2" viewBox="0 0 3.2 3.2"><path d="M0.3 0.3 L2.9 2.9 M2.9 0.3 L0.3 2.9" stroke="#eee" stroke-width="0.6"/></svg>
<svg class="ab" style="left:842.6px;top:334.1px" width="3.6" height="3.6" viewBox="0 0 3.6 3.6"><path d="M0.3 0.3 L3.3 3.3 M3.3 0.3 L0.3 3.3" stroke="#666" stroke-width="0.8"/></svg>
<div class="ab" style="left:851px;top:335.8px;width:4.6px;height:0.8px;background:#888"></div>
<div class="ab" style="left:4px;top:342px;width:14px;height:118px;background:#e8e7e7"></div>
<div class="t" style="left:19.8px;top:343.25px;font-family:'Liberation Mono', monospace;font-size:5.5px;color:#1e1e1e;white-space:pre;transform:scaleX(0.8945);transform-origin:0 0"><span style="color:#c02ac4">^</span><span style="color:#5a3aa8">strstr</span>#<span style="color:#3535b5">1</span>() : <span style="color:#c02ac4">NULL</span></div>
<div class="t" style="left:19.8px;top:349.49px;font-family:'Liberation Mono', monospace;font-size:5.5px;color:#1e1e1e;white-space:pre;transform:scaleX(0.8945);transform-origin:0 0"><span style="color:#c02ac4">^</span><span style="color:#5a3aa8">strstr</span>#<span style="color:#3535b5">2</span>() : 32x <span style="color:#3535b5">00</span></div>
<div class="t" style="left:19.8px;top:355.73px;font-family:'Liberation Mono', monospace;font-size:5.5px;color:#1e1e1e;white-space:pre;transform:scaleX(0.8945);transform-origin:0 0">    <span style="color:#c02ac4">==============</span>Path <span style="color:#3535b5">9</span> expected outputs :<span style="color:#c02ac4">===============</span></div>
<div class="t" style="left:19.8px;top:361.97px;font-family:'Liberation Mono', monospace;font-size:5.5px;color:#1e1e1e;white-space:pre;transform:scaleX(0.8945);transform-origin:0 0"><span style="color:#c02ac4">!</span>name() : <span style="color:#c02ac4">NULL</span></div>
<div class="t" style="left:19.8px;top:368.21px;font-family:'Liberation Mono', monospace;font-size:5.5px;color:#1e1e1e;white-space:pre;transform:scaleX(0.8945);transform-origin:0 0">$check_ole_name_return#() : <span style="color:#3535b5">78</span> : 6c : <span style="color:#3535b5">73</span> : <span style="color:#3535b5">00</span></div>
<div class="t" style="left:19.8px;top:374.45px;font-family:'Liberation Mono', monospace;font-size:5.5px;color:#1e1e1e;white-space:pre;transform:scaleX(0.8945);transform-origin:0 0"><span style="color:#c02ac4">------------------</span>Path <span style="color:#3535b5">10</span> is generated with following inputs:<span style="color:#c02ac4">------------</span></div>
<div class="t" style="left:19.8px;top:380.69px;font-family:'Liberation Mono', monospace;font-size:5.5px;color:#1e1e1e;white-space:pre;transform:scaleX(0.8945);transform-origin:0 0">errCode: <span style="color:#3535b5">0</span></div>
<div class="t" style="left:19.8px;top:386.93px;font-family:'Liberation Mono', monospace;font-size:5.5px;color:#1e1e1e;white-space:pre;transform:scaleX(0.8945);transform-origin:0 0"><span style="color:#c02ac4">!</span>name() : <span style="color:#c02ac4">NULL</span></div>
<div class="t" style="left:19.8px;top:393.17px;font-family:'Liberation Mono', monospace;font-size:5.5px;color:#1e1e1e;white-space:pre;transform:scaleX(0.8945);transform-origin:0 0"><span style="color:#c02ac4">^</span><span style="color:#5a3aa8">strstr</span>#<span style="color:#3535b5">0</span>() : <span style="color:#c02ac4">NULL</span></div>
<div class="t" style="left:19.8px;top:399.41px;font-family:'Liberation Mono', monospace;font-size:5.5px;color:#1e1e1e;white-space:pre;transform:scaleX(0.8945);transform-origin:0 0"><span style="color:#c02ac4">^</span><span style="color:#5a3aa8">strstr</span>#<span style="color:#3535b5">1</span>() : 32x <span style="color:#3535b5">00</span></div>
<div class="t" style="left:19.8px;top:405.65px;font-family:'Liberation Mono', monospace;font-size:5.5px;color:#1e1e1e;white-space:pre;transform:scaleX(0.8945);transform-origin:0 0">    <span style="color:#c02ac4">==============</span>Path <span style="color:#3535b5">10</span> expected outputs :<span style="color:#c02ac4">===============</span></div>
<div class="t" style="left:19.8px;top:411.89px;font-family:'Liberation Mono', monospace;font-size:5.5px;color:#1e1e1e;white-space:pre;transform:scaleX(0.8945);transform-origin:0 0"><span style="color:#c02ac4">!</span>name() : <span style="color:#c02ac4">NULL</span></div>
<div class="t" style="left:19.8px;top:418.13px;font-family:'Liberation Mono', monospace;font-size:5.5px;color:#1e1e1e;white-space:pre;transform:scaleX(0.8945);transform-origin:0 0">$check_ole_name_return#() : <span style="color:#3535b5">78</span> : 6c : <span style="color:#3535b5">73</span> : <span style="color:#3535b5">00</span></div>
<div class="t" style="left:19.8px;top:424.37px;font-family:'Liberation Mono', monospace;font-size:5.5px;color:#1e1e1e;white-space:pre;transform:scaleX(0.8945);transform-origin:0 0">There are <span style="color:#3535b5">10</span> paths in total</div>
<div class="t" style="left:19.8px;top:430.61px;font-family:'Liberation Mono', monospace;font-size:5.5px;color:#1e1e1e;white-space:pre;transform:scaleX(0.8945);transform-origin:0 0">Watchdog stoped before timeout.</div>
<div class="t" style="left:19.8px;top:436.85px;font-family:'Liberation Mono', monospace;font-size:5.5px;color:#1e1e1e;white-space:pre;transform:scaleX(0.8945);transform-origin:0 0">watch dog stopped.</div>
<div class="t" style="left:19.8px;top:443.09px;font-family:'Liberation Mono', monospace;font-size:5.5px;color:#1e1e1e;white-space:pre;transform:scaleX(0.8945);transform-origin:0 0">SECore engine shutdown.</div>
<div class="ab" style="left:4px;top:448.1px;width:14.5px;height:6.4px;background:#c9c9cb"></div>
<div class="ab" style="left:18.5px;top:448.1px;width:838.5px;height:6.4px;background:#a9a9a9"></div>
<div class="t" style="left:19.8px;top:449.33px;font-family:'Liberation Mono', monospace;font-size:5.5px;color:#222;white-space:pre;transform:scaleX(0.8945);transform-origin:0 0"><b>函数</b>:check_ole_name<b>生成成功</b></div>
<div class="ab" style="left:4px;top:460px;width:853px;height:8.5px;background:#e9ecef"></div>
<div class="ab" style="left:792.2px;top:460px;width:64.6px;height:8.4px;background:#d6d7d9"></div>
<div class="t" style="left:794.6px;top:463.4px;font-size:5.3px;color:#555;font-weight:bold">工程进度</div>
<div class="ab" style="left:818.3px;top:462.8px;width:3.8px;height:3.8px;border:0.5px solid #888;border-radius:50%"></div>
<svg class="ab" style="left:831px;top:462.6px" width="4" height="5" viewBox="0 0 4 5"><path d="M2 0.3 C3.3 0.3 3.8 1.3 3.8 2.1 C3.8 3.2 2.6 4 2 4.8 C1.4 4 0.2 3.2 0.2 2.1 C0.2 1.3 0.7 0.3 2 0.3Z" fill="#111"/></svg>
<div class="t" style="left:835.5px;top:462.6px;font-size:5.9px;color:#444">console</div>
<div class="ab" style="left:4px;top:469px;width:853px;height:9.5px;background:#3fa99b"></div>
<div class="ab" style="left:615px;top:377.6px;width:223px;height:82px;background:#3b3a52;box-shadow:0 0 2px rgba(0,0,0,0.3)"></div>
<div class="t" style="left:619px;top:382.8px;font-size:6px;color:#f2f2f2;font-weight:bold">工程进度</div>
<div class="ab" style="left:828.5px;top:384.2px;width:5.3px;height:0.8px;background:#ccc"></div>
<div class="ab" style="left:615px;top:391.6px;width:223px;height:0.6px;background:#2e2d42"></div>
<div class="ab" style="left:619px;top:396.6px;width:215.3px;height:14.4px;background:#4a4a6a"></div>
<div class="t" style="left:623.3px;top:403.1px;font-size:5.3px;color:#f0f0f0;font-weight:bold">工程名</div>
<div class="t" style="left:748.5px;top:403.1px;font-size:5.3px;color:#f0f0f0;font-weight:bold">状态</div>
<div class="ab" style="left:744.7px;top:396.6px;width:0.6px;height:63px;background:#2f2e44"></div>
<div class="ab" style="left:812.0px;top:396.6px;width:0.6px;height:63px;background:#2f2e44"></div>
<div class="ab" style="left:619px;top:425.2px;width:215.3px;height:0.6px;background:#2f2e44"></div>
<div class="t" style="left:623.3px;top:416.5px;font-size:5.6px;color:#f6f6f6">blackholegit 638ec3b1e847b1e9b335851650···</div>
<div class="ab" style="left:749.3px;top:413.9px;width:59px;height:10.4px;background:#4c4d6e"></div>
<div class="t" style="left:749.3px;width:111.3px;text-align:center;top:417.3px;font-size:10px;transform:scale(0.53);transform-origin:0 0;color:#fff;font-weight:bold">全部用例生成并执行</div>
<div class="ab" style="left:820px;top:416.0px;width:5.8px;height:6px;background:#e8141c"></div>
<div class="ab" style="left:619px;top:439.7px;width:215.3px;height:0.6px;background:#2f2e44"></div>
<div class="t" style="left:623.3px;top:431.0px;font-size:5.6px;color:#f6f6f6">irssi 1.0.3</div>
<div class="ab" style="left:749.3px;top:428.4px;width:59px;height:10.4px;background:#4c4d6e"></div>
<div class="t" style="left:749.3px;width:111.3px;text-align:center;top:431.8px;font-size:10px;transform:scale(0.53);transform-origin:0 0;color:#fff;font-weight:bold">全部用例生成并执行</div>
<div class="ab" style="left:820px;top:430.5px;width:5.8px;height:6px;background:#e8141c"></div>
<div class="ab" style="left:619px;top:454.2px;width:215.3px;height:0.6px;background:#2f2e44"></div>
<div class="t" style="left:623.3px;top:445.5px;font-size:5.6px;color:#f6f6f6">formost 1.2</div>
<div class="ab" style="left:749.3px;top:442.9px;width:59px;height:10.4px;background:#4c4d6e"></div>
<div class="t" style="left:749.3px;width:111.3px;text-align:center;top:446.3px;font-size:10px;transform:scale(0.53);transform-origin:0 0;color:#fff;font-weight:bold">全部用例生成并执行</div>
<div class="ab" style="left:820px;top:445.0px;width:5.8px;height:6px;background:#e8141c"></div>
<svg class="ab" style="left:597px;top:432px" width="36" height="28" viewBox="0 0 36 28">
<ellipse cx="13" cy="10.8" rx="11" ry="9.2" fill="#fff" opacity="0.7" stroke="#d8d8d8" stroke-width="0.4" stroke-dasharray="0.8 0.8"/>
<path d="M7 18 L5.8 21.5 L11 19.2 Z" fill="#fff" opacity="0.7"/>
<ellipse cx="24.3" cy="18.6" rx="8.8" ry="8" fill="#c4c4c8" opacity="0.95"/>
<path d="M28.5 25 L31 27.3 L26 26 Z" fill="#c4c4c8"/>
<circle cx="9.7" cy="8.4" r="0.8" fill="#aaa"/><circle cx="17.3" cy="8.4" r="0.9" fill="#555"/>
<circle cx="21.4" cy="16.4" r="1" fill="#333"/><circle cx="28" cy="16.4" r="1" fill="#555"/>
</svg>
<div class="t" style="left:636.5px;top:432.5px;font-size:25px;font-weight:300;color:rgba(225,225,230,0.68)">公</div>
<div class="t" style="left:661.5px;top:432.5px;font-size:25px;font-weight:300;color:rgba(225,225,230,0.68)">众</div>
<div class="t" style="left:687.5px;top:432.5px;font-size:25px;font-weight:300;color:rgba(225,225,230,0.68)">号</div>
<div class="t" style="left:717.5px;top:432.5px;font-size:25px;font-weight:300;color:rgba(225,225,230,0.68)">·</div>
<div class="t" style="left:739.5px;top:432.5px;font-size:25px;font-weight:300;color:rgba(225,225,230,0.68)">中</div>
<div class="t" style="left:763.0px;top:432.5px;font-size:25px;font-weight:300;color:rgba(225,225,230,0.68)">安</div>
<div class="t" style="left:788.5px;top:432.5px;font-size:25px;font-weight:300;color:rgba(225,225,230,0.68)">质</div>
<div class="t" style="left:813.5px;top:432.5px;font-size:25px;font-weight:300;color:rgba(225,225,230,0.68)">信</div>
</body></html>
